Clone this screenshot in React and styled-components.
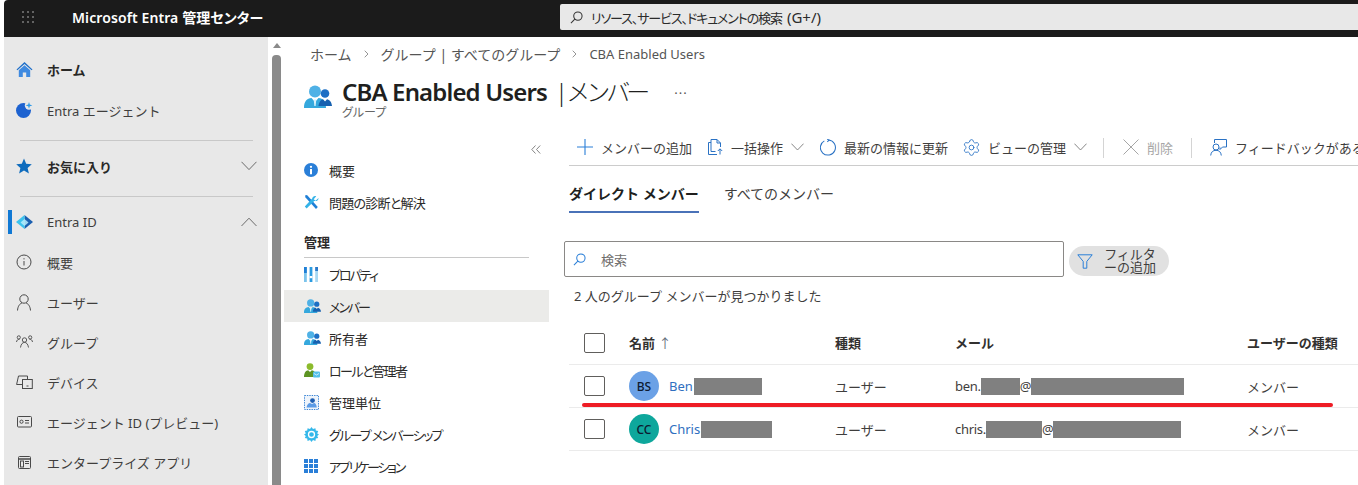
import React from 'react';
import styled, { createGlobalStyle } from 'styled-components';
import { Settings } from 'lucide-react';

const GlobalStyle = createGlobalStyle`
  html, body {
    margin: 0;
    padding: 0;
    background: #fff;
  }
  body {
    font-family: "Noto Sans", "Noto Sans CJK JP", sans-serif;
    font-size: 13px;
    color: #323130;
  }
`;

const Page = styled.div`
  width: 1358px;
  height: 485px;
  padding-left: 4px;
  box-sizing: border-box;
  overflow: hidden;
  background: #fff;
`;

const TopBar = styled.header`
  height: 37px;
  box-sizing: border-box;
  display: flex;
  align-items: center;
  padding: 0 0 3px 18px;
  background: #1b1b1b;
  border-top-left-radius: 4px;
`;

const Brand = styled.div`
  width: 488px;
  margin-left: 38px;
  color: #fff;
  font-size: 14px;
  font-weight: 600;
  letter-spacing: 0.1px;
  font-feature-settings: "palt";
  white-space: nowrap;
`;

const GlobalSearch = styled.div`
  flex: 1;
  height: 26px;
  display: flex;
  align-items: center;
  gap: 8px;
  padding-left: 10px;
  background: #e8e8e8;
  border-radius: 2px 0 0 2px;
  font-size: 13px;
  font-feature-settings: "palt";
  color: #2b2b2b;
`;

const SearchKana = styled.span`
  letter-spacing: -1.1px;
  margin-right: 5px;
`;

const SearchHint = styled.span`
  font-size: 15px;
`;

const Body = styled.div`
  display: flex;
  height: 448px;
`;

const Sidebar = styled.nav`
  width: 264px;
  flex: none;
  padding-top: 13px;
  box-sizing: border-box;
  background: #e8e8e8;
  overflow: hidden;
`;

const SideRow = styled.div`
  position: relative;
  height: 40px;
  box-sizing: border-box;
  display: flex;
  align-items: center;
  padding: 0 11px 2px 12px;
  margin-bottom: ${(p) => p.$gap || 0}px;
  font-size: 13px;
  font-weight: ${(p) => (p.$bold ? 700 : 400)};
  color: ${(p) => (p.$bold ? '#292827' : '#3f3e3d')};
  &::before {
    content: ${(p) => (p.$active ? '""' : 'none')};
    position: absolute;
    left: 4px;
    top: 7px;
    width: 4px;
    height: 24px;
    background: #0f78d4;
  }
`;

const SideIcon = styled.span`
  width: 31px;
  flex: none;
  display: flex;
  align-items: center;
`;

const SideLabel = styled.span`
  flex: 1;
  white-space: nowrap;
`;

const SideDivider = styled.div`
  height: 1px;
  margin: ${(p) => p.$top}px 15px 6px 16px;
  background: #c8c8c8;
`;

const Scrollbar = styled.div`
  width: 9px;
  flex: none;
  margin-left: 4px;
  display: flex;
  flex-direction: column;
  align-items: center;
  padding-top: 6px;
`;

const ScrollArrow = styled.div`
  width: 0;
  height: 0;
  border-left: 4px solid transparent;
  border-right: 4px solid transparent;
  border-bottom: 5px solid #8a8a8a;
  margin-bottom: 7px;
`;

const ScrollThumb = styled.div`
  width: 9px;
  flex: 1;
  background: #8a8a8a;
  border-radius: 4px 4px 0 0;
`;

const Main = styled.main`
  flex: 1;
  min-width: 0;
  overflow: hidden;
`;

const Crumbs = styled.div`
  height: 36px;
  box-sizing: border-box;
  display: flex;
  align-items: center;
  padding: 0 0 2px 29px;
  font-size: 14px;
  color: #555;
  white-space: nowrap;
`;

const CrumbCurrent = styled.span`
  font-size: 13px;
`;

const CrumbSep = styled.span`
  margin: 0 12px;
  display: flex;
`;

const TitleRow = styled.div`
  display: flex;
  padding-left: 23px;
  height: 58px;
`;

const TitleIcon = styled.div`
  width: 28px;
  padding-top: 12px;
  margin-right: 10px;
`;

const TitleText = styled.div`
  display: flex;
  flex-direction: column;
`;

const Title = styled.h1`
  margin: 0;
  height: 32px;
  line-height: 32px;
  font-size: 24px;
  font-weight: 600;
  color: #201f1e;
  white-space: nowrap;
  letter-spacing: -0.85px;
`;

const TitleLight = styled.span`
  font-weight: 300;
  letter-spacing: -4px;
  margin-left: 8px;
`;

const TitleMore = styled.span`
  margin-left: 28px;
  font-size: 13px;
  font-weight: 400;
  letter-spacing: 1px;
  vertical-align: 7px;
  color: #555;
`;

const Subtitle = styled.div`
  font-size: 12px;
  line-height: 16px;
  color: #666;
  font-feature-settings: "palt";
`;

const Blade = styled.div`
  display: flex;
`;

const Menu = styled.div`
  width: 265px;
  flex: none;
  margin-left: 3px;
`;

const CollapseRow = styled.div`
  height: 23px;
  display: flex;
  justify-content: flex-end;
  align-items: flex-end;
  padding-right: 8px;
`;

const MenuItem = styled.div`
  height: 32px;
  display: flex;
  align-items: center;
  padding-left: 20px;
  font-size: 13px;
  font-feature-settings: "palt";
  color: #2b2a29;
  background: ${(p) => (p.$active ? '#ebebe9' : 'transparent')};
  white-space: nowrap;
`;

const MenuIcon = styled.span`
  width: 25px;
  flex: none;
  display: flex;
  align-items: center;
`;

const MenuLabel = styled.span`
  letter-spacing: ${(p) => p.$tight || 0}px;
`;

const MenuHeading = styled.div`
  height: 39px;
  margin: 0 20px;
  display: flex;
  align-items: flex-end;
  border-bottom: 1px solid #c8c8c8;
  font-size: 13px;
  font-weight: 700;
  color: #2b2a29;
  line-height: 30px;
`;

const Content = styled.div`
  flex: 1;
  min-width: 0;
  margin-left: 15px;
`;

const Toolbar = styled.div`
  height: 34px;
  box-sizing: content-box;
  margin-left: 5px;
  display: flex;
  align-items: center;
  border-bottom: 1px solid #ccc;
  white-space: nowrap;
`;

const ToolItem = styled.div`
  display: flex;
  align-items: center;
  gap: 8px;
  padding: 0 8px 2px;
  font-size: 13px;
  color: ${(p) => (p.$disabled ? '#a6a6a6' : '#3f3e3d')};
`;

const ToolLabel = styled.span`
  display: flex;
  align-items: center;
  gap: 8px;
`;

const ToolDivider = styled.div`
  width: 1px;
  height: 20px;
  flex: none;
  margin: 0 ${(p) => p.$right}px 0 ${(p) => p.$left}px;
  background: #d4d4d4;
`;

const GearIcon = styled(Settings)`
  margin: 0 -1px 0 -2px;
`;

const Tabs = styled.div`
  display: flex;
  gap: 25px;
  margin: 18px 0 0 5px;
`;

const Tab = styled.div`
  padding-bottom: 7px;
  line-height: 20px;
  font-size: 14px;
  font-weight: ${(p) => (p.$active ? 700 : 400)};
  color: ${(p) => (p.$active ? '#201f1e' : '#3f3e3d')};
  border-bottom: 2px solid ${(p) => (p.$active ? '#4a72b8' : 'transparent')};
`;

const SearchRow = styled.div`
  display: flex;
  align-items: flex-end;
  gap: 5px;
  margin-top: 28px;
`;

const SearchBox = styled.div`
  width: 500px;
  height: 36px;
  box-sizing: border-box;
  display: flex;
  align-items: center;
  gap: 15px;
  padding-left: 8px;
  border: 1px solid #8a8886;
  border-radius: 2px;
  color: #6f6e6d;
`;

const FilterPill = styled.div`
  width: 100px;
  height: 30px;
  margin-bottom: 1px;
  box-sizing: border-box;
  display: flex;
  align-items: center;
  gap: 11px;
  padding-left: 8px;
  border-radius: 15px;
  background: #e1e1e1;
  font-size: 13px;
  line-height: 13px;
  color: #3f3e3d;
  text-align: center;
`;

const CountText = styled.div`
  margin: 9px 0 0 10px;
  line-height: 20px;
  color: #3f3e3d;
`;

const Table = styled.div`
  position: relative;
  margin: 14px 0 0 5px;
  width: 800px;
`;

const Row = styled.div`
  display: grid;
  grid-template-columns: 60px 206px 120px 292px 1fr;
  align-items: center;
  height: ${(p) => (p.$head ? 44 : 42)}px;
  border-bottom: 1px solid #ebebeb;
  white-space: nowrap;
`;

const HeadCell = styled.div`
  font-size: 13px;
  font-weight: 700;
  color: #323130;
`;

const SortArrow = styled.span`
  font-weight: 400;
  color: #5f6b7a;
`;

const Cell = styled.div`
  display: flex;
  align-items: center;
  font-size: 13px;
  color: #3f3e3d;
`;

const MailCell = styled(Cell)`
  letter-spacing: -0.3px;
`;

const CheckBox = styled.span`
  display: block;
  width: 21px;
  height: 20px;
  box-sizing: border-box;
  margin: ${(p) => (p.$head ? '1px' : '0')} 0 0 15px;
  border: 1px solid #605e5c;
  border-radius: 2px;
  background: #fff;
`;

const Avatar = styled.span`
  width: 30px;
  height: 30px;
  flex: none;
  display: flex;
  align-items: center;
  justify-content: center;
  margin-right: 10px;
  border-radius: 50%;
  background: ${(p) => p.$bg};
  color: #0c1a30;
  font-size: 12px;
  font-weight: 500;
`;

const NameLink = styled.span`
  color: #2f6fc0;
`;

const Mask = styled.span`
  display: inline-block;
  width: ${(p) => p.$w}px;
  height: 17px;
  margin-left: ${(p) => p.$ml || 0}px;
  background: #808080;
`;

const RedMark = styled.div`
  position: absolute;
  left: 13px;
  top: 83px;
  width: 751px;
  height: 4px;
  border-radius: 2px;
  background: #ee1c25;
`;

const Waffle = () => (
  <svg width="12" height="12" viewBox="0 0 12 12" fill="#e4e4e4">
    {[1, 6, 11].flatMap((y) =>
      [1, 6, 11].map((x) => <rect key={`${x}-${y}`} x={x - 0.6} y={y - 0.6} width="1.2" height="1.2" />)
    )}
  </svg>
);

const SearchGlyph = ({ color = '#444', size = 13 }) => (
  <svg width={size} height={size} viewBox="0 0 14 14" fill="none" stroke={color} strokeWidth="1.1">
    <circle cx="8.5" cy="5.5" r="4.5" />
    <path d="M5.2 8.8 1 13" />
  </svg>
);

const HomeIcon = () => (
  <svg width="17" height="17" viewBox="0 0 17 17">
    <path d="M8.5 1 0.5 8.4 1.4 9.3 8.5 3 15.6 9.3 16.5 8.4Z" fill="#1f6fc9" />
    <path d="M2.8 9.2 8.5 4.2 14.2 9.2V16H10.2V11.5H6.8V16H2.8Z" fill="#3f8ae0" />
  </svg>
);

const AgentIcon = () => (
  <svg width="17" height="16" viewBox="0 0 17 16">
    <circle cx="7.5" cy="8.5" r="7.5" fill="#1d62d0" />
    <circle cx="13" cy="3.5" r="4.2" fill="#e8e8e8" />
    <path d="M13 0 13.8 2.6 16.4 3.4 13.8 4.2 13 6.8 12.2 4.2 9.6 3.4 12.2 2.6Z" fill="#2f9be8" />
  </svg>
);

const StarIcon = () => (
  <svg width="16" height="16" viewBox="0 0 16 16">
    <path d="M8 .6 10.2 5.7 15.8 6.2 11.6 9.9 12.9 15.4 8 12.5 3.1 15.4 4.4 9.9 .2 6.2 5.8 5.7Z" fill="#0f6cbd" />
  </svg>
);

const EntraIcon = () => (
  <svg width="17" height="14" viewBox="0 0 17 14">
    <path d="M8.5 0 17 7 8.5 14Z" fill="#1a5fb0" />
    <path d="M8.5 0 0 7 8.5 14Z" fill="#3cc3ee" />
    <path d="M8.5 4 12.5 7.6 8.5 11 4.5 7.6Z" fill="#b7ecfb" opacity=".85" />
  </svg>
);

const Chevron = ({ up, size = 16, color = '#6a6a6a' }) => (
  <svg width={size} height={size * 0.6} viewBox="0 0 16 9.6" fill="none" stroke={color} strokeWidth="1">
    <path d={up ? 'M.5 9 8 1.2 15.5 9' : 'M.5 .8 8 8.6 15.5 .8'} />
  </svg>
);

const lineProps = { fill: 'none', stroke: '#4a4a4a', strokeWidth: 1 };

const InfoLine = () => (
  <svg width="16" height="16" viewBox="0 0 16 16" {...lineProps}>
    <circle cx="8" cy="8" r="7" />
    <path d="M8 7v4.5M8 4.2v1.2" />
  </svg>
);

const UserLine = () => (
  <svg width="16" height="17" viewBox="0 0 16 17" {...lineProps}>
    <circle cx="8" cy="5" r="4.2" />
    <path d="M1.5 16.5C1.8 12 4 9.5 6 9M14.5 16.5C14.2 12 12 9.5 10 9" />
  </svg>
);

const GroupLine = () => (
  <svg width="17" height="14" viewBox="0 0 17 14" {...lineProps} strokeWidth=".9">
    <circle cx="8.5" cy="5" r="2.2" />
    <circle cx="2.8" cy="2.4" r="1.6" />
    <circle cx="14.2" cy="2.4" r="1.6" />
    <path d="M4.5 12.5C5 9 6.6 7.4 8.5 7.4S12 9 12.5 12.5M.5 7C.8 5 1.8 4.4 3.4 4.4M16.5 7C16.2 5 15.2 4.4 13.6 4.4" />
  </svg>
);

const DeviceLine = () => (
  <svg width="17" height="14" viewBox="0 0 17 14" {...lineProps}>
    <path d="M7 9.5H.6L2.5 1H11.5V4.5" />
    <rect x="6.5" y="4.5" width="9.8" height="9" />
    <path d="M10.5 11h2" />
  </svg>
);

const IdCardLine = () => (
  <svg width="15" height="12" viewBox="0 0 15 12" {...lineProps} transform="translate(1 0)">
    <rect x=".5" y=".5" width="14" height="10.5" rx="1" />
    <circle cx="4.5" cy="5.7" r="1.6" />
    <path d="M8 4.5h4M8 7h4" />
  </svg>
);

const AppLine = () => (
  <svg width="13" height="13" viewBox="0 0 13 13" {...lineProps} transform="translate(2 0)">
    <rect x=".5" y=".5" width="12" height="12" rx="1" />
    <path d="M.5 3h12" strokeWidth="1.5" />
    <rect x="2.5" y="5" width="3" height="6" />
    <path d="M7 5.5h4M7 7.5h4" />
  </svg>
);

const UsersIcon = ({ width = 17, height = 14 }) => (
  <svg width={width} height={height} viewBox="0 0 28 23">
    <circle cx="11" cy="6.5" r="6" fill="#4fb1e6" />
    <path d="M0 23C0 16 3 13.5 7.5 13L11 17 14.5 13C19 13.5 22 16 22 23Z" fill="#35a8dd" />
    <path d="M9.7 14.4H12.3L11.6 21H10.4Z" fill="#d8f1fb" />
    <circle cx="21" cy="8.5" r="4.3" fill="#1d6fc4" />
    <path d="M14.5 21C15 16.5 17.5 14.5 19 14.2L21 16.5 23 14.2C25.5 14.7 27.6 16.5 28 21Z" fill="#1761b0" />
  </svg>
);

const InfoFilled = () => (
  <svg width="14" height="14" viewBox="0 0 14 14">
    <circle cx="7" cy="7" r="7" fill="#2a7fd8" />
    <path d="M6 6h2v5.2H6Z" fill="#fff" />
    <circle cx="7" cy="3.8" r="1.15" fill="#fff" />
  </svg>
);

const ToolsIcon = () => (
  <svg width="15" height="14" viewBox="0 0 15 14">
    <path d="M1 .6 3 0 13.8 12 12 14 1.5 2.6Z" fill="#1f7fd6" />
    <path d="M14.5 3 11.6 5.7 9.7 4.2 12.2 1.2C10.4.5 8.6 1.5 8.2 3.4L.8 11.4 2.6 13.4 10.2 5.9C12.4 6.6 14.8 5.4 14.5 3Z" fill="#34b3e8" />
  </svg>
);

const PropsIcon = () => (
  <svg width="14" height="15" viewBox="0 0 14 15">
    <rect x="0" y="0" width="2.8" height="15" fill="#7cc4ec" />
    <rect x="0" y="0" width="2.8" height="6" fill="#1f7fd6" />
    <rect x="5.6" y="0" width="2.8" height="15" fill="#2b9be0" />
    <rect x="5.6" y="9" width="2.8" height="2.2" fill="#fff" />
    <rect x="11.2" y="0" width="2.8" height="15" fill="#a7d8f3" />
    <rect x="11.2" y="0" width="2.8" height="4" fill="#2b78c9" />
  </svg>
);

const RoleIcon = () => (
  <svg width="16" height="15" viewBox="0 0 16 15">
    <circle cx="6" cy="3.6" r="3.4" fill="#8cbb2c" />
    <path d="M0 14C0 9.5 2 7.5 4.2 7.2L6 9 7.8 7.2C10 7.5 12 9.5 12 14Z" fill="#5d9423" />
    <rect x="9" y="8.5" width="7" height="6" rx="1" fill="#54c0ea" />
    <path d="M10 10.5 12.5 12 15 10.5" stroke="#fff" strokeWidth=".7" fill="none" />
  </svg>
);

const AdminUnitIcon = () => (
  <svg width="15" height="15" viewBox="0 0 15 15">
    <rect x=".5" y=".5" width="14" height="14" fill="#eef4fb" stroke="#3d86d6" strokeDasharray="1.4 1" />
    <circle cx="8.5" cy="5.6" r="2.4" fill="#1d5fb3" />
    <path d="M2.5 12.5C3 9.5 4.5 8 6 8L8 9 10 8C11.5 8 12.5 9.5 12.8 12.5Z" fill="#5b9be6" />
  </svg>
);

const MembershipIcon = () => (
  <svg width="15" height="15" viewBox="0 0 15 15">
    <path d="M7.5 0 9 2 11.4 1.2 11.8 3.6 14.2 4.1 13.2 6.4 15 7.5 13.2 8.9 14.2 11 11.8 11.5 11.4 13.9 9 13.1 7.5 15 6 13.1 3.6 13.9 3.2 11.5.8 11 1.8 8.9 0 7.5 1.8 6.4.8 4.1 3.2 3.6 3.6 1.2 6 2Z" fill="#35b8ea" />
    <circle cx="7.5" cy="7.5" r="3" fill="none" stroke="#fff" strokeWidth="1.3" />
  </svg>
);

const GridIcon = () => (
  <svg width="14" height="14" viewBox="0 0 14 14" fill="#2a7fd8">
    {[0, 5, 10].flatMap((y) =>
      [0, 5, 10].map((x) => <rect key={`${x}-${y}`} x={x} y={y} width="4" height="4" />)
    )}
  </svg>
);

const CrumbArrow = () => (
  <svg width="5" height="8" viewBox="0 0 5 8" fill="none" stroke="#888" strokeWidth=".9">
    <path d="M.7.7 4 4 .7 7.3" />
  </svg>
);

const DoubleLeft = () => (
  <svg width="10" height="9" viewBox="0 0 10 9" fill="none" stroke="#777" strokeWidth=".9">
    <path d="M4.5.5.8 4.5 4.5 8.5M9.2.5 5.5 4.5 9.2 8.5" />
  </svg>
);

const PlusIcon = () => (
  <svg width="16" height="16" viewBox="0 0 16 16" stroke="#2a7fd8" strokeWidth="1.1">
    <path d="M8 0v16M0 8h16" />
  </svg>
);

const BulkIcon = () => (
  <svg width="15" height="16" viewBox="0 0 15 16" fill="none" stroke="#2a72c4" strokeWidth="1">
    <path d="M3 3.5H.5V15.5H9" />
    <path d="M3 .5H9L12.5 4V8M3 .5V12.5H7.5M9 .5V4H12.5" />
    <path d="M12 15.5V10M9.8 12 12 9.8 14.2 12" />
  </svg>
);

const RefreshIcon = () => (
  <svg width="16" height="17" viewBox="0 0 17 18" fill="none" stroke="#2a72c4" strokeWidth="1.1">
    <path d="M9.3 1.1A8 8 0 1 1 4.6 2" />
    <path d="M7.6 0 9.6 1.2 7.8 3" />
  </svg>
);

const CloseIcon = () => (
  <svg width="16" height="16" viewBox="0 0 16 16" stroke="#a6a6a6" strokeWidth="1">
    <path d="M.5.5 15.5 15.5M15.5.5.5 15.5" />
  </svg>
);

const FeedbackIcon = () => (
  <svg width="17" height="17" viewBox="0 0 17 17" fill="none" stroke="#2a72c4" strokeWidth="1">
    <path d="M4.5 4V.5H16.5V8H12.5L10 10.5V8.5" />
    <circle cx="6" cy="8" r="3" />
    <path d="M.7 16.5C1 13 3 11.3 6 11.3S11 13 11.3 16.5" />
  </svg>
);

const FilterIcon = () => (
  <svg width="16" height="15" viewBox="0 0 16 15" fill="none" stroke="#2a7fd8" strokeWidth="1">
    <path d="M.8.8H15.2L9.8 7.4V14.2H6.2V7.4Z" />
  </svg>
);

const sideTop = [
  { label: 'ホーム', icon: <HomeIcon />, bold: true, gap: 1 },
  { label: 'Entra エージェント', icon: <AgentIcon /> },
];

const sideBottom = [
  { label: '概要', icon: <InfoLine /> },
  { label: 'ユーザー', icon: <UserLine /> },
  { label: 'グループ', icon: <GroupLine /> },
  { label: 'デバイス', icon: <DeviceLine /> },
  { label: 'エージェント ID (プレビュー)', icon: <IdCardLine /> },
  { label: 'エンタープライズ アプリ', icon: <AppLine /> },
];

const menuTop = [
  { label: '概要', icon: <InfoFilled /> },
  { label: '問題の診断と解決', icon: <ToolsIcon />, tight: -0.75 },
];

const menuManage = [
  { label: 'プロパティ', icon: <PropsIcon />, tight: -2 },
  { label: 'メンバー', icon: <UsersIcon />, active: true, tight: -2 },
  { label: '所有者', icon: <UsersIcon /> },
  { label: 'ロールと管理者', icon: <RoleIcon />, tight: -1.5 },
  { label: '管理単位', icon: <AdminUnitIcon /> },
  { label: 'グループ メンバーシップ', icon: <MembershipIcon />, tight: -1.7 },
  { label: 'アプリケーション', icon: <GridIcon />, tight: -2.2 },
];

const members = [
  { initials: 'BS', color: '#6ba1e6', first: 'Ben', mask: 68, mailName: 'ben.', local: 39, domain: 153 },
  { initials: 'CC', color: '#0ea79c', first: 'Chris', mask: 71, mailName: 'chris.', local: 56, domain: 128 },
];

export default function App() {
  return (
    <Page>
      <GlobalStyle />
      <TopBar>
        <Waffle />
        <Brand>Microsoft Entra 管理センター</Brand>
        <GlobalSearch>
          <SearchGlyph color="#333" />
          <span>
            <SearchKana>リソース、サービス、ドキュメントの検索</SearchKana>
            <SearchHint>(G+/)</SearchHint>
          </span>
        </GlobalSearch>
      </TopBar>
      <Body>
        <Sidebar>
          {sideTop.map((item) => (
            <SideRow key={item.label} $bold={item.bold} $gap={item.gap}>
              <SideIcon>{item.icon}</SideIcon>
              <SideLabel>{item.label}</SideLabel>
            </SideRow>
          ))}
          <SideDivider $top={9} />
          <SideRow $bold>
            <SideIcon><StarIcon /></SideIcon>
            <SideLabel>お気に入り</SideLabel>
            <Chevron />
          </SideRow>
          <SideDivider $top={9} />
          <SideRow $active>
            <SideIcon><EntraIcon /></SideIcon>
            <SideLabel>Entra ID</SideLabel>
            <Chevron up />
          </SideRow>
          {sideBottom.map((item) => (
            <SideRow key={item.label}>
              <SideIcon>{item.icon}</SideIcon>
              <SideLabel>{item.label}</SideLabel>
            </SideRow>
          ))}
        </Sidebar>
        <Scrollbar>
          <ScrollArrow />
          <ScrollThumb />
        </Scrollbar>
        <Main>
          <Crumbs>
            ホーム
            <CrumbSep><CrumbArrow /></CrumbSep>
            グループ | すべてのグループ
            <CrumbSep><CrumbArrow /></CrumbSep>
            <CrumbCurrent>CBA Enabled Users</CrumbCurrent>
          </Crumbs>
          <TitleRow>
            <TitleIcon><UsersIcon width={28} height={23} /></TitleIcon>
            <TitleText>
              <Title>
                CBA Enabled Users
                <TitleLight>| メンバー</TitleLight>
                <TitleMore>...</TitleMore>
              </Title>
              <Subtitle>グループ</Subtitle>
            </TitleText>
          </TitleRow>
          <Blade>
            <Menu>
              <CollapseRow><DoubleLeft /></CollapseRow>
              {menuTop.map((item) => (
                <MenuItem key={item.label}>
                  <MenuIcon>{item.icon}</MenuIcon>
                  <MenuLabel $tight={item.tight}>{item.label}</MenuLabel>
                </MenuItem>
              ))}
              <MenuHeading>管理</MenuHeading>
              {menuManage.map((item) => (
                <MenuItem key={item.label} $active={item.active}>
                  <MenuIcon>{item.icon}</MenuIcon>
                  <MenuLabel $tight={item.tight}>{item.label}</MenuLabel>
                </MenuItem>
              ))}
            </Menu>
            <Content>
              <Toolbar>
                <ToolItem><PlusIcon />メンバーの追加</ToolItem>
                <ToolItem>
                  <BulkIcon />
                  <ToolLabel>一括操作<Chevron size={13} /></ToolLabel>
                </ToolItem>
                <ToolItem><RefreshIcon />最新の情報に更新</ToolItem>
                <ToolItem>
                  <GearIcon size={19} color="#2a72c4" strokeWidth={1.1} />
                  <ToolLabel>ビューの管理<Chevron size={13} /></ToolLabel>
                </ToolItem>
                <ToolDivider $left={8} $right={11} />
                <ToolItem $disabled><CloseIcon />削除</ToolItem>
                <ToolDivider $left={10} $right={10} />
                <ToolItem><FeedbackIcon />フィードバックがある場合</ToolItem>
              </Toolbar>
              <Tabs>
                <Tab $active>ダイレクト メンバー</Tab>
                <Tab>すべてのメンバー</Tab>
              </Tabs>
              <SearchRow>
                <SearchBox>
                  <SearchGlyph color="#2a7fd8" />
                  検索
                </SearchBox>
                <FilterPill>
                  <FilterIcon />
                  <span>フィルタ<br />ーの追加</span>
                </FilterPill>
              </SearchRow>
              <CountText>2 人のグループ メンバーが見つかりました</CountText>
              <Table>
                <Row $head>
                  <Cell><CheckBox $head /></Cell>
                  <HeadCell>名前 <SortArrow>↑</SortArrow></HeadCell>
                  <HeadCell>種類</HeadCell>
                  <HeadCell>メール</HeadCell>
                  <HeadCell>ユーザーの種類</HeadCell>
                </Row>
                {members.map((m) => (
                  <Row key={m.initials}>
                    <Cell><CheckBox /></Cell>
                    <Cell>
                      <Avatar $bg={m.color}>{m.initials}</Avatar>
                      <NameLink>{m.first}</NameLink>
                      <Mask $w={m.mask} $ml={1} />
                    </Cell>
                    <Cell>ユーザー</Cell>
                    <MailCell>
                      {m.mailName}
                      <Mask $w={m.local} />
                      @
                      <Mask $w={m.domain} />
                    </MailCell>
                    <Cell>メンバー</Cell>
                  </Row>
                ))}
                <RedMark />
              </Table>
            </Content>
          </Blade>
        </Main>
      </Body>
    </Page>
  );
}
